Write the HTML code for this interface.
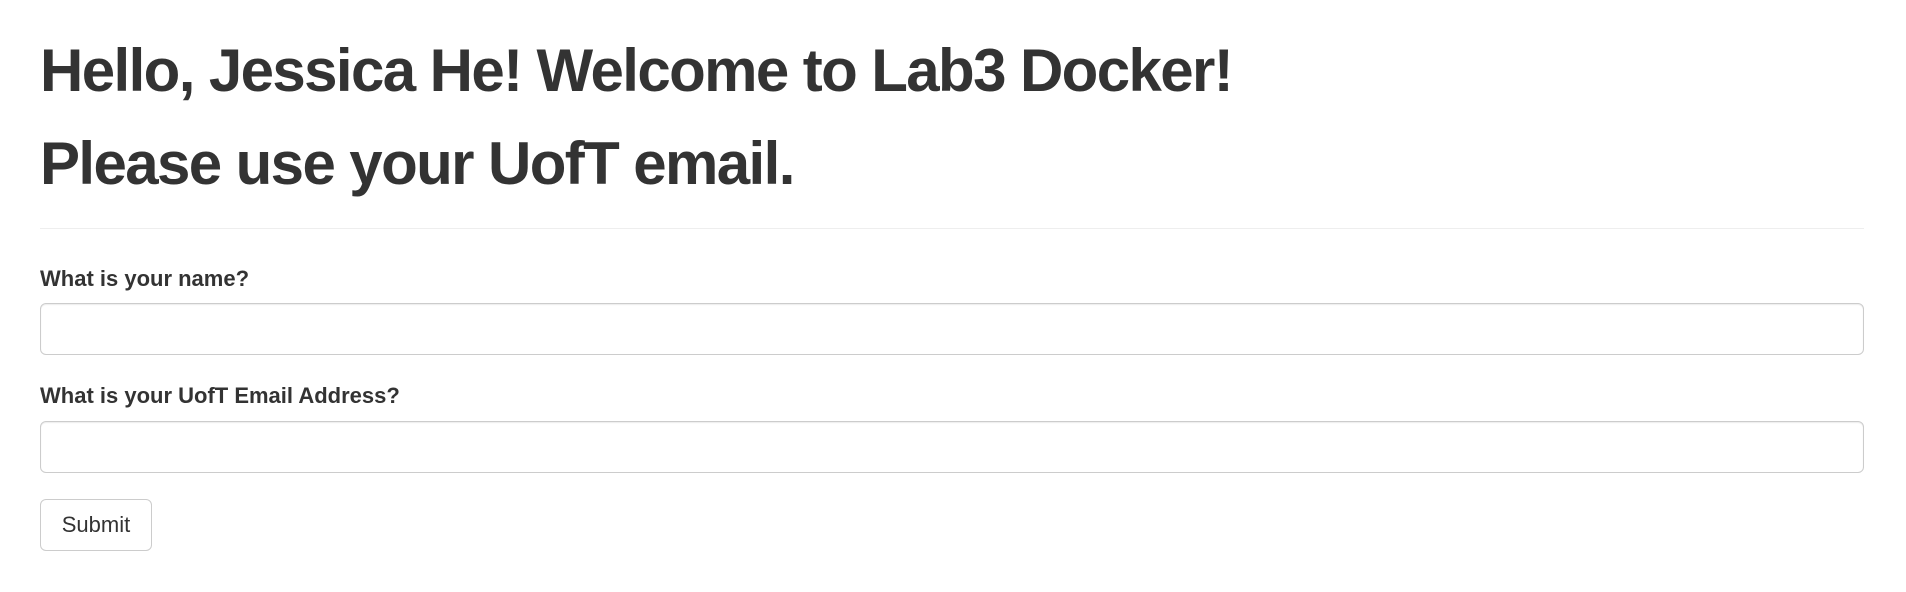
<!DOCTYPE html>
<html><head><meta charset="utf-8"><style>
body{margin:0;background:#fff;color:#333;font-family:"Liberation Sans",Arial,sans-serif;width:1906px;height:592px;overflow:hidden;position:relative}
.a{position:absolute;left:40px;white-space:nowrap}
h1{margin:0;font-weight:bold;font-size:60px;line-height:1;letter-spacing:-1.6px}
.l{font-weight:bold;font-size:22px;line-height:1}
.in{position:absolute;left:40px;width:1824px;height:52px;box-sizing:border-box;border:1px solid #ccc;border-radius:6px;box-shadow:inset 0 1px 1px rgba(0,0,0,.075)}
.btn{position:absolute;left:40px;top:499px;width:112px;height:52px;box-sizing:border-box;border:1px solid #ccc;border-radius:6px;font-size:22px;text-align:center;line-height:50px}
</style></head><body>
<h1 class="a" style="top:41px">Hello, Jessica He! Welcome to Lab3 Docker!</h1>
<h1 class="a" style="top:134px">Please use your UofT email.</h1>
<div style="position:absolute;left:40px;top:228px;width:1824px;height:1px;background:#eee"></div>
<div class="a l" style="top:268px">What is your name?</div>
<div class="in" style="top:303px"></div>
<div class="a l" style="top:385px">What is your UofT Email Address?</div>
<div class="in" style="top:421px"></div>
<div class="btn">Submit</div>
</body></html>
